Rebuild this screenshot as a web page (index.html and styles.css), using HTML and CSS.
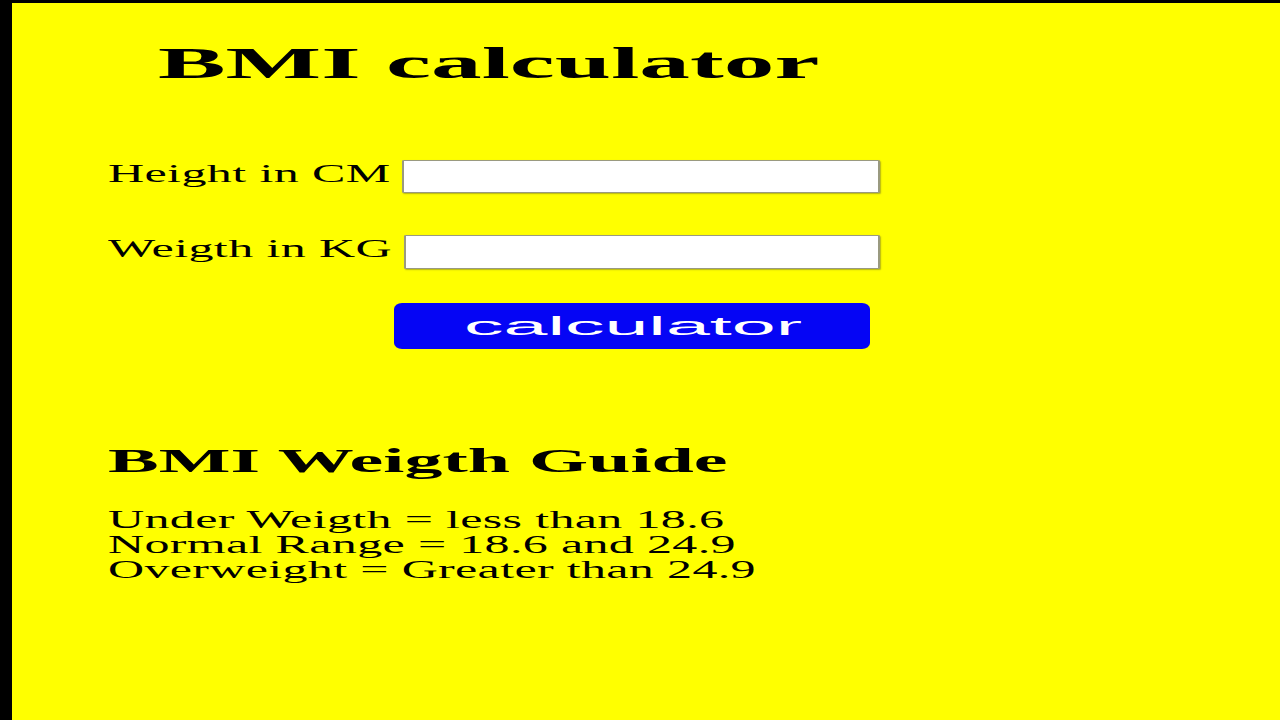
FILE: index.html
```html
<!DOCTYPE html>
<html lang="en">
<head>
<meta charset="utf-8">
<title>BMI calculator</title>
<link rel="stylesheet" href="styles.css">
</head>
<body>
<div class="screen">
  <div class="stage">
    <h1 class="title">BMI calculator</h1>
    <form class="calc-form">
      <div class="field-row">
        <label class="field-label" for="height">Height in CM</label>
        <input class="field-input" id="height" type="text">
      </div>
      <div class="field-row field-row-second">
        <label class="field-label" for="weight">Weigth in KG</label>
        <input class="field-input" id="weight" type="text">
      </div>
      <button class="calc-btn" type="button"><span class="calc-btn-text">calculator</span></button>
    </form>
    <h2 class="guide-title">BMI Weigth Guide</h2>
    <p class="guide-list">Under Weigth = less than 18.6<br>Normal Range = 18.6 and 24.9<br>Overweight = Greater than 24.9</p>
  </div>
</div>
</body>
</html>
```

FILE: styles.css
```css
html, body {
  margin: 0;
  padding: 0;
  background: #000;
  height: 100%;
  overflow: hidden;
}

.screen {
  margin: 3px 0 0 12px;
  height: 717px;
  background: #ffff00;
  overflow: hidden;
}

.stage {
  width: 634px;
  padding-top: 34px;
  transform: scaleX(2);
  transform-origin: 0 0;
  font-family: "Liberation Serif", "Times New Roman", serif;
  color: #000;
}

.title {
  margin: 0 0 0 72.5px;
  font-size: 45px;
  line-height: 52px;
  font-weight: bold;
  white-space: nowrap;
  transform: scaleX(1.126);
  transform-origin: 0 0;
}

.calc-form {
  margin: 71px 0 0 0;
}

.field-row {
  display: flex;
  align-items: flex-start;
  padding-left: 48px;
  height: 33px;
}

.field-row-second {
  margin-top: 42px;
}

.field-label {
  font-size: 25px;
  line-height: 27px;
  letter-spacing: 0.2px;
  white-space: nowrap;
  margin-right: 6px;
}

.field-input {
  box-sizing: border-box;
  width: 238.5px;
  height: 33px;
  margin: 0;
  padding: 0 4px;
  background: #fff;
  border: 1px solid #9a9a80;
  border-radius: 1px;
  box-shadow: 0.5px 1px 1px rgba(90, 90, 40, 0.45);
  font-size: 16px;
}

.field-row-second .field-input {
  height: 34px;
  width: 237.5px;
}

.calc-btn {
  display: block;
  box-sizing: border-box;
  margin: 35px 0 0 191px;
  width: 238px;
  height: 46px;
  padding: 0;
  border: none;
  border-radius: 4px / 6px;
  background: #0505f5;
  color: #fff;
  font-family: "Liberation Sans", Arial, sans-serif;
  font-size: 25px;
  line-height: 46px;
  text-align: center;
  cursor: pointer;
}

.calc-btn-text {
  display: inline-block;
  transform: scaleX(1.58);
}

.guide-title {
  margin: 93px 0 0 48px;
  font-size: 33px;
  line-height: 38px;
  font-weight: bold;
  white-space: nowrap;
  transform: scaleX(1.152);
  transform-origin: 0 0;
}

.guide-list {
  margin: 27px 0 0 48px;
  font-size: 25px;
  line-height: 25px;
  letter-spacing: 0.17px;
  white-space: nowrap;
}
```
